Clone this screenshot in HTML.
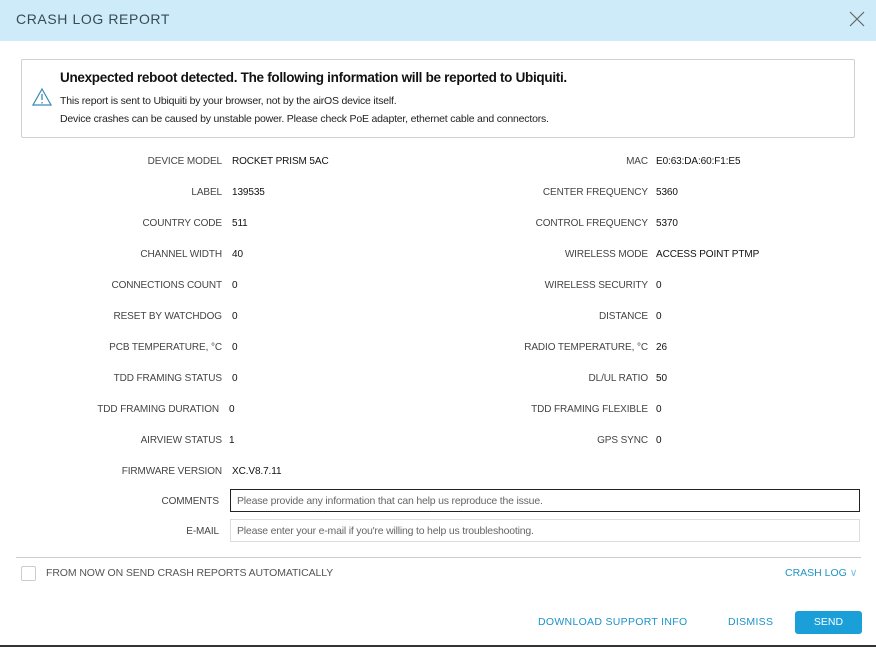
<!DOCTYPE html><html><head><style>
*{margin:0;padding:0;box-sizing:border-box}
body{width:876px;height:647px;background:#fff;font-family:"Liberation Sans",sans-serif;position:relative;overflow:hidden;color:#222}
.hdr{position:absolute;left:0;top:0;width:876px;height:41px;background:#cdebf9}
.hdr .t{position:absolute;left:16px;top:11px;font-size:14px;letter-spacing:.6px;color:#3a4a55}
.x{position:absolute;right:11px;top:11px}
.box{position:absolute;left:21px;top:59px;width:834px;height:79px;border:1px solid #d0d0d0;border-radius:2px}
.b1{position:absolute;left:38px;top:10px;font-size:13.5px;font-weight:bold;letter-spacing:-.3px;color:#111}
.b2{position:absolute;left:38px;top:35px;font-size:10.5px;letter-spacing:-.2px}
.b3{position:absolute;left:38px;top:53px;font-size:10.5px;letter-spacing:-.2px}
.l,.v{position:absolute;font-size:10px;letter-spacing:-.1px;white-space:nowrap;margin-top:2px}
.l{color:#444;text-align:right}
.v{color:#111}
.in{position:absolute;left:230px;width:630px;height:23px;border:1px solid #ddd;font-size:10.5px;color:#666;padding:5px 6px;letter-spacing:-.2px}
.hr{position:absolute;left:16px;top:557px;width:845px;border-top:1px solid #ccc}
.cb{position:absolute;left:21px;top:566px;width:15px;height:15px;border:1px solid #ccc;border-radius:2px}
.lk{position:absolute;font-size:10.5px;color:#1d93c8;letter-spacing:.3px}
.send{position:absolute;left:795px;top:611px;width:67px;height:23px;background:#1a9fd8;border-radius:3px;color:#fff;font-size:10.5px;text-align:center;line-height:23px}
</style></head><body>
<div class="hdr"><div class="t">CRASH LOG REPORT</div>
<svg class="x" width="16" height="16" viewBox="0 0 16 16"><path d="M1 1L15 15M15 1L1 15" stroke="#666" stroke-width="1.2"/></svg></div>
<div class="box">
<svg style="position:absolute;left:10px;top:28px" width="20" height="18" viewBox="0 0 20 18"><path d="M10 1L19 17H1Z" fill="none" stroke="#3a8ab5" stroke-width="1.2"/><path d="M10 6V12M10 14V15.5" stroke="#3a8ab5" stroke-width="1.3"/></svg>
<div class="b1">Unexpected reboot detected. The following information will be reported to Ubiquiti.</div>
<div class="b2">This report is sent to Ubiquiti by your browser, not by the airOS device itself.</div>
<div class="b3">Device crashes can be caused by unstable power. Please check PoE adapter, ethernet cable and connectors.</div>
</div>
<div class="l" style="right:654px;top:154px">DEVICE MODEL</div><div class="v" style="left:232px;top:154px">ROCKET PRISM 5AC</div>
<div class="l" style="right:228px;top:154px">MAC</div><div class="v" style="left:656px;top:154px">E0:63:DA:60:F1:E5</div>
<div class="l" style="right:654px;top:185px">LABEL</div><div class="v" style="left:232px;top:185px">139535</div>
<div class="l" style="right:228px;top:185px">CENTER FREQUENCY</div><div class="v" style="left:656px;top:185px">5360</div>
<div class="l" style="right:654px;top:216px">COUNTRY CODE</div><div class="v" style="left:232px;top:216px">511</div>
<div class="l" style="right:228px;top:216px">CONTROL FREQUENCY</div><div class="v" style="left:656px;top:216px">5370</div>
<div class="l" style="right:654px;top:247px">CHANNEL WIDTH</div><div class="v" style="left:232px;top:247px">40</div>
<div class="l" style="right:228px;top:247px">WIRELESS MODE</div><div class="v" style="left:656px;top:247px">ACCESS POINT PTMP</div>
<div class="l" style="right:654px;top:278px">CONNECTIONS COUNT</div><div class="v" style="left:232px;top:278px">0</div>
<div class="l" style="right:228px;top:278px">WIRELESS SECURITY</div><div class="v" style="left:656px;top:278px">0</div>
<div class="l" style="right:654px;top:309px">RESET BY WATCHDOG</div><div class="v" style="left:232px;top:309px">0</div>
<div class="l" style="right:228px;top:309px">DISTANCE</div><div class="v" style="left:656px;top:309px">0</div>
<div class="l" style="right:654px;top:340px">PCB TEMPERATURE, °C</div><div class="v" style="left:232px;top:340px">0</div>
<div class="l" style="right:228px;top:340px">RADIO TEMPERATURE, °C</div><div class="v" style="left:656px;top:340px">26</div>
<div class="l" style="right:654px;top:371px">TDD FRAMING STATUS</div><div class="v" style="left:232px;top:371px">0</div>
<div class="l" style="right:228px;top:371px">DL/UL RATIO</div><div class="v" style="left:656px;top:371px">50</div>
<div class="l" style="right:657px;top:402px">TDD FRAMING DURATION</div><div class="v" style="left:229px;top:402px">0</div>
<div class="l" style="right:228px;top:402px">TDD FRAMING FLEXIBLE</div><div class="v" style="left:656px;top:402px">0</div>
<div class="l" style="right:654px;top:433px">AIRVIEW STATUS</div><div class="v" style="left:229px;top:433px">1</div>
<div class="l" style="right:228px;top:433px">GPS SYNC</div><div class="v" style="left:656px;top:433px">0</div>
<div class="l" style="right:654px;top:464px">FIRMWARE VERSION</div><div class="v" style="left:232px;top:464px">XC.V8.7.11</div>
<div class="l" style="right:657px;top:494px">COMMENTS</div>
<div class="in" style="top:489px;border-color:#222">Please provide any information that can help us reproduce the issue.</div>
<div class="l" style="right:657px;top:524px">E-MAIL</div>
<div class="in" style="top:519px">Please enter your e-mail if you're willing to help us troubleshooting.</div>
<div class="hr"></div>
<div class="cb"></div>
<div style="position:absolute;left:46px;top:567px;font-size:10.5px;color:#555;letter-spacing:-.1px">FROM NOW ON SEND CRASH REPORTS AUTOMATICALLY</div>
<div class="lk" style="left:785px;top:567px;letter-spacing:0">CRASH LOG <span style="color:#7bbfe0">&#8744;</span></div>
<div class="lk" style="left:538px;top:616px">DOWNLOAD SUPPORT INFO</div>
<div class="lk" style="left:728px;top:616px">DISMISS</div>
<div class="send">SEND</div>
<div style="position:absolute;left:0;top:645px;width:876px;height:2px;background:#333"></div>
</body></html>
